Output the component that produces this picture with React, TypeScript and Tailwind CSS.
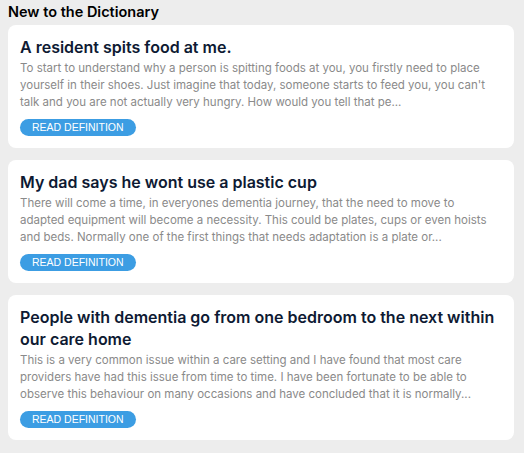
import React from 'react';

interface Entry {
  title: string;
  excerpt: string;
}

const entries: Entry[] = [
  {
    title: 'A resident spits food at me.',
    excerpt:
      "To start to understand why a person is spitting foods at you, you firstly need to place yourself in their shoes. Just imagine that today, someone starts to feed you, you can't talk and you are not actually very hungry. How would you tell that pe...",
  },
  {
    title: 'My dad says he wont use a plastic cup',
    excerpt:
      'There will come a time, in everyones dementia journey, that the need to move to adapted equipment will become a necessity. This could be plates, cups or even hoists and beds. Normally one of the first things that needs adaptation is a plate or...',
  },
  {
    title: 'People with dementia go from one bedroom to the next within our care home',
    excerpt:
      'This is a very common issue within a care setting and I have found that most care providers have had this issue from time to time. I have been fortunate to be able to observe this behaviour on many occasions and have concluded that it is normally...',
  },
];

const DefinitionCard: React.FC<{ entry: Entry }> = ({ entry }) => {
  return (
    <div className="bg-white rounded-lg pl-3 pr-[14px] pt-[11px] pb-3 flex flex-col">
      <h3 className="text-[16px] leading-[22px] font-semibold text-[#0e1a33]">{entry.title}</h3>
      <p className="mt-[2px] text-[11.5px] leading-[17px] text-[#8a8a8a]">{entry.excerpt}</p>
      <div className="mt-2 flex">
        <button className="h-[17px] px-3 rounded-full bg-[#3c9de3] text-white text-[10.5px] leading-[17px] font-['Liberation_Sans',Arial,sans-serif]">
          READ DEFINITION
        </button>
      </div>
    </div>
  );
};

export default function App() {
  return (
    <div className="min-h-screen bg-[#ededed] pl-2 pr-[10px] pt-[2px] font-['Inter',sans-serif]">
      <h2 className="text-[14.5px] leading-[20px] font-semibold text-black mb-[3px]">New to the Dictionary</h2>
      <div className="flex flex-col gap-3">
        {entries.map((e) => (
          <DefinitionCard key={e.title} entry={e} />
        ))}
      </div>
    </div>
  );
}
